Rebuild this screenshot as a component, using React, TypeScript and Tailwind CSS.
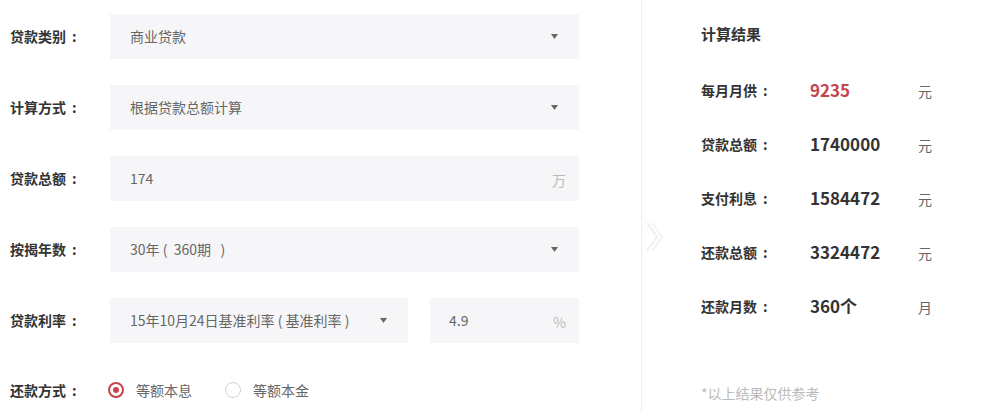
import React from "react"

const font = { fontFamily: '"Noto Sans CJK SC", "Noto Sans", sans-serif' }

function Arrow() {
  return (
    <svg width="7" height="5" viewBox="0 0 7 5" className="shrink-0">
      <path d="M0 0 L7 0 L3.5 5 Z" fill="#666" />
    </svg>
  )
}

function Label({ text, width }: { text: string; width: string }) {
  return (
    <div className={`${width} shrink-0 text-[14px] font-bold text-[#333] flex items-center`}>
      <span>{text}</span>
      <span className="ml-[6px]">:</span>
    </div>
  )
}

function Row({ label, children }: { label: string; children: React.ReactNode }) {
  return (
    <div className="flex items-center h-[45px]">
      <Label text={label} width="w-[100px]" />
      {children}
    </div>
  )
}

function SelectBox({ value, width }: { value: string; width: string }) {
  return (
    <div className={`${width} h-[45px] bg-[#f6f6f8] flex items-center justify-between pl-[20px] pr-[21px] text-[14px] text-[#666]`}>
      <span className="whitespace-pre">{value}</span>
      <Arrow />
    </div>
  )
}

function InputBox({ value, unit, width, pl }: { value: string; unit: string; width: string; pl: string }) {
  return (
    <div className={`${width} h-[45px] bg-[#f6f6f8] flex items-center justify-between ${pl} pr-[13px] text-[14px] text-[#666]`}>
      <span>{value}</span>
      <span className="text-[14px] text-[#bbb] mt-[3px]">{unit}</span>
    </div>
  )
}

function Radio({ checked, label }: { checked: boolean; label: string }) {
  return (
    <div className="flex items-center gap-[12px]">
      {checked ? (
        <span className="w-[16px] h-[16px] rounded-full border-2 border-[#c4464c] flex items-center justify-center">
          <span className="w-[6px] h-[6px] rounded-full bg-[#c4464c]" />
        </span>
      ) : (
        <span className="w-[16px] h-[16px] rounded-full border-[1.5px] border-[#d0d0d0]" />
      )}
      <span className="text-[14px] text-[#666]">{label}</span>
    </div>
  )
}

const results = [
  { label: "每月月供", value: "9235", unit: "元", red: true },
  { label: "贷款总额", value: "1740000", unit: "元" },
  { label: "支付利息", value: "1584472", unit: "元" },
  { label: "还款总额", value: "3324472", unit: "元" },
  { label: "还款月数", value: "360个", unit: "月" },
]

export default function App() {
  return (
    <div className="w-[1005px] h-[413px] bg-white flex overflow-hidden" style={font}>
      {/* 左侧表单 */}
      <div className="w-[641px] shrink-0 pl-[10px] pt-[14px] flex flex-col gap-[26px]">
        <Row label="贷款类别">
          <SelectBox value="商业贷款" width="w-[469px]" />
        </Row>
        <Row label="计算方式">
          <SelectBox value="根据贷款总额计算" width="w-[469px]" />
        </Row>
        <Row label="贷款总额">
          <InputBox value="174" unit="万" width="w-[469px]" pl="pl-[20px]" />
        </Row>
        <Row label="按揭年数">
          <SelectBox value="30年 (  360期   )" width="w-[469px]" />
        </Row>
        <Row label="贷款利率">
          <div className="flex gap-[22px]">
            <SelectBox value="15年10月24日基准利率 ( 基准利率 )" width="w-[298px]" />
            <InputBox value="4.9" unit="%" width="w-[149px]" pl="pl-[19px]" />
          </div>
        </Row>
        <div className="flex items-center h-[20px] mt-[11px]">
          <Label text="还款方式" width="w-[98px]" />
          <div className="flex items-center gap-[33px]">
            <Radio checked label="等额本息" />
            <Radio checked={false} label="等额本金" />
          </div>
        </div>
      </div>

      {/* 右侧结果 */}
      <div className="relative flex-1 border-l border-[#efefef] pl-[59px] pt-[24px]">
        <svg width="20" height="30" viewBox="0 0 20 30" className="absolute left-[3px] top-[222px]">
          <polyline points="2,1 12,15 2,29" fill="none" stroke="#f0f0f0" strokeWidth="2" />
          <polyline points="7,1 17,15 7,29" fill="none" stroke="#f3f3f3" strokeWidth="2" />
        </svg>
        <div className="text-[15px] font-bold text-[#333] leading-[20px]">计算结果</div>
        <div className="flex flex-col mt-[19px]">
          {results.map((r) => (
            <div key={r.label} className="flex items-center h-[54px]">
              <Label text={r.label} width="w-[109px]" />
              <div
                className={`w-[108px] text-[17px] font-bold ${r.red ? "text-[#c4464c]" : "text-[#333]"}`}
              >
                {r.value}
              </div>
              <div className="text-[14px] text-[#666] mt-[2px]">{r.unit}</div>
            </div>
          ))}
        </div>
        <div className="mt-[50px] text-[14px] leading-[20px] text-[#bbb]">*以上结果仅供参考</div>
      </div>
    </div>
  )
}
